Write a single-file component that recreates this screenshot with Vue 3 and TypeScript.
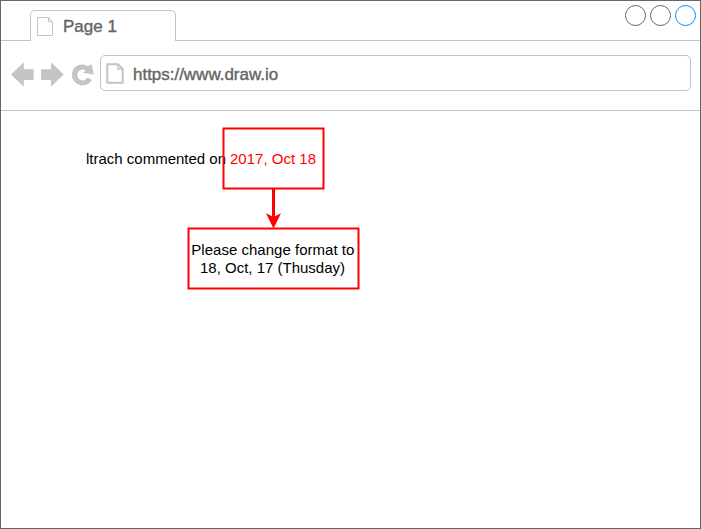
<script setup lang="ts">
import { ref } from 'vue'

interface Box {
  id: string
  x: number
  y: number
  width: number
  height: number
}

const pageTitle = ref('Page 1')
const address = ref('https://www.draw.io')
const windowButtons: string[] = ['plain', 'plain', 'accent']
const boxes: Box[] = [
  { id: 'date', x: 222.5, y: 17.5, width: 100, height: 60 },
  { id: 'request', x: 187.5, y: 117.5, width: 170, height: 60 },
]
</script>

<template>
  <div class="window">
    <header class="tabs">
      <div class="rule lead"></div>
      <div class="tab">
        <svg class="tab-icon" width="16" height="19" viewBox="0 0 16 19">
          <path d="M.5 .5H11.5L15.5 4.8V18.5H.5Z M11.5 .5V4.8H15.5" />
        </svg>
        <span class="title">{{ pageTitle }}</span>
      </div>
      <div class="rule buttons">
        <svg v-for="(kind, i) in windowButtons" :key="i" :class="kind" width="21" height="21" viewBox="0 0 21 21">
          <circle cx="10.5" cy="10.5" r="10" />
        </svg>
      </div>
    </header>

    <nav class="toolbar">
      <svg class="nav-icons" width="84" height="26" viewBox="0 0 84 26">
        <path d="M0 13.5L12.8 1.2V8.3H22.6V19H12.8V25.7Z" />
        <path d="M52.7 13.5L40 1.2V8.3H30.1V19H40V25.7Z" />
        <path transform="translate(.4 .6)" d="M76 4.7L80.5 3L82.2 12.8L71.3 11.2L74.6 9C70.5 6.2 66 9.2 66 13.4C66 19 73.2 21.1 76.1 15.8L80.6 18.5C75.3 27.5 60.5 24.2 60.5 13.4C60.5 4.7 69.2 .2 76 4.7Z" />
      </svg>
      <div class="address">
        <svg class="page-icon" width="18" height="22" viewBox="0 0 18 22">
          <path d="M1.3 2.2H12L16.7 7V20.7H1.3Z" />
          <path class="fold" d="M12 2.2V7H16.7" />
        </svg>
        <span class="url">{{ address }}</span>
      </div>
    </nav>

    <main class="canvas">
      <svg width="699" height="417" viewBox="0 0 699 417">
        <text x="85" y="53" textLength="140" lengthAdjust="spacing">ltrach commented on</text>
        <text class="highlight" x="229" y="53" textLength="86" lengthAdjust="spacing">2017, Oct 18</text>
        <rect v-for="b in boxes" :key="b.id" class="box" :x="b.x" :y="b.y" :width="b.width" :height="b.height" />
        <text x="190.3" y="144" textLength="163" lengthAdjust="spacing">Please change format to</text>
        <text x="199" y="162" textLength="145" lengthAdjust="spacing">18, Oct, 17 (Thusday)</text>
        <path class="stem" d="M272.5 77.5V108" />
        <path class="head" d="M272.5 117.5L265 102.2L272.5 106L280 102.2Z" />
      </svg>
    </main>
  </div>
</template>

<style>
body {
  margin: 0;
  background: #fff;
}
</style>

<style scoped>
.window {
  box-sizing: border-box;
  width: 701px;
  height: 529px;
  border: 1px solid #666;
  display: flex;
  flex-direction: column;
  overflow: hidden;
  font-family: "Liberation Sans", Arial, sans-serif;
  color: #666;
}
.window svg {
  display: block;
  flex: none;
}
.tabs {
  display: flex;
  height: 40px;
  flex: none;
}
.rule {
  box-sizing: border-box;
  border-bottom: 1px solid #c4c4c4;
}
.lead {
  width: 29px;
}
.tab {
  box-sizing: border-box;
  width: 146px;
  height: 31px;
  margin-top: 9px;
  padding: 6px 0 0 6px;
  border: 1px solid #c4c4c4;
  border-bottom: 0;
  border-radius: 5px 5px 0 0;
  display: flex;
  align-items: flex-start;
  gap: 10px;
}
.tab-icon path {
  fill: none;
  stroke: #c4c4c4;
}
.title,
.url {
  font-size: 17px;
  line-height: 20px;
  -webkit-text-stroke: 0.4px #666;
  white-space: nowrap;
}
.buttons {
  flex: 1;
  display: flex;
  justify-content: flex-end;
  gap: 4px;
  padding: 4px 4px 0 0;
}
.buttons circle {
  fill: #fff;
  stroke: #666;
}
.buttons .accent circle {
  stroke: #008cff;
}
.toolbar {
  box-sizing: border-box;
  height: 70px;
  flex: none;
  padding: 14px 9px 0 10px;
  border-bottom: 1px solid #c4c4c4;
  display: flex;
  align-items: flex-start;
  gap: 5px;
}
.nav-icons {
  margin-top: 6px;
}
.nav-icons path {
  fill: #c4c4c4;
}
.address {
  box-sizing: border-box;
  flex: 1;
  height: 36px;
  border: 1px solid #c4c4c4;
  border-radius: 5px;
  padding: 0 5px;
  display: flex;
  align-items: center;
  gap: 9px;
}
.page-icon path {
  fill: none;
  stroke: #c4c4c4;
  stroke-width: 2;
}
.page-icon .fold {
  stroke-width: 1.3;
}
.url {
  letter-spacing: -0.02px;
  margin-top: 4px;
}
.canvas {
  flex: 1;
}
.canvas text {
  font-size: 15px;
  fill: #000;
}
.canvas .highlight {
  fill: #f00;
}
.box {
  fill: none;
  stroke: #f00;
  stroke-width: 2;
}
.stem {
  fill: none;
  stroke: #f00;
  stroke-width: 3;
}
.head {
  fill: #f00;
}
</style>
